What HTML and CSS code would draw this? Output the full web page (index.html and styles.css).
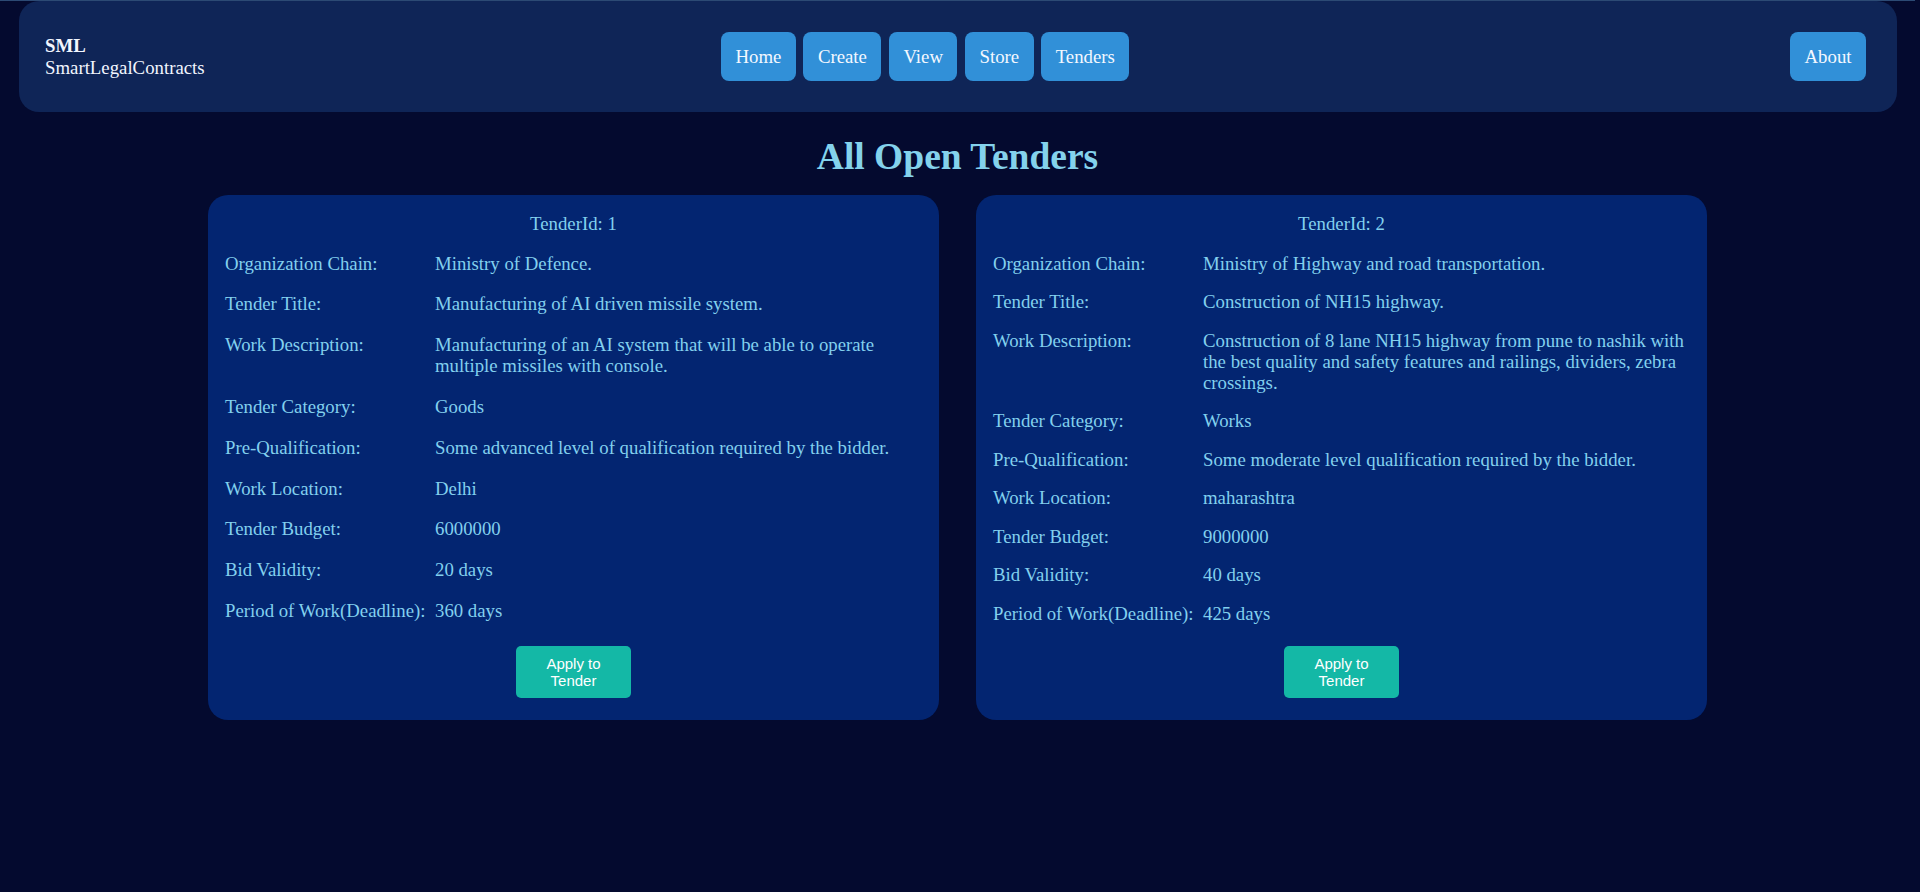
FILE: index.html
```html
<!DOCTYPE html>
<html lang="en">
<head>
<meta charset="utf-8">
<title>SmartLegalContracts - Tenders</title>
<link rel="stylesheet" href="styles.css">
</head>
<body>
<div class="topline"></div>
<header class="header">
  <div class="brand">
    <div class="brand-short">SML</div>
    <div class="brand-long">SmartLegalContracts</div>
  </div>
  <nav class="nav">
    <a class="nav-btn" href="#">Home</a>
    <a class="nav-btn" href="#">Create</a>
    <a class="nav-btn" href="#">View</a>
    <a class="nav-btn" href="#">Store</a>
    <a class="nav-btn" href="#">Tenders</a>
  </nav>
  <a class="nav-btn about" href="#">About</a>
</header>

<main class="main">
  <h1 class="title">All Open Tenders</h1>
  <div class="cards">
    <section class="card">
      <div class="card-id">TenderId: 1</div>
      <div class="rows">
        <div class="row"><div class="label">Organization Chain:</div><div class="value">Ministry of Defence.</div></div>
        <div class="row"><div class="label">Tender Title:</div><div class="value">Manufacturing of AI driven missile system.</div></div>
        <div class="row"><div class="label">Work Description:</div><div class="value">Manufacturing of an AI system that will be able to operate multiple missiles with console.</div></div>
        <div class="row"><div class="label">Tender Category:</div><div class="value">Goods</div></div>
        <div class="row"><div class="label">Pre-Qualification:</div><div class="value">Some advanced level of qualification required by the bidder.</div></div>
        <div class="row"><div class="label">Work Location:</div><div class="value">Delhi</div></div>
        <div class="row"><div class="label">Tender Budget:</div><div class="value">6000000</div></div>
        <div class="row"><div class="label">Bid Validity:</div><div class="value">20 days</div></div>
        <div class="row"><div class="label">Period of Work(Deadline):</div><div class="value">360 days</div></div>
      </div>
      <div class="actions"><button class="apply">Apply to Tender</button></div>
    </section>
    <section class="card">
      <div class="card-id">TenderId: 2</div>
      <div class="rows">
        <div class="row"><div class="label">Organization Chain:</div><div class="value">Ministry of Highway and road transportation.</div></div>
        <div class="row"><div class="label">Tender Title:</div><div class="value">Construction of NH15 highway.</div></div>
        <div class="row"><div class="label">Work Description:</div><div class="value">Construction of 8 lane NH15 highway from pune to nashik with the best quality and safety features and railings, dividers, zebra crossings.</div></div>
        <div class="row"><div class="label">Tender Category:</div><div class="value">Works</div></div>
        <div class="row"><div class="label">Pre-Qualification:</div><div class="value">Some moderate level qualification required by the bidder.</div></div>
        <div class="row"><div class="label">Work Location:</div><div class="value">maharashtra</div></div>
        <div class="row"><div class="label">Tender Budget:</div><div class="value">9000000</div></div>
        <div class="row"><div class="label">Bid Validity:</div><div class="value">40 days</div></div>
        <div class="row"><div class="label">Period of Work(Deadline):</div><div class="value">425 days</div></div>
      </div>
      <div class="actions"><button class="apply">Apply to Tender</button></div>
    </section>
  </div>
</main>
</body>
</html>
```

FILE: styles.css
```css
* { box-sizing: border-box; }

html, body {
  margin: 0;
  background: #040a2f;
}

body {
  padding-right: 5px;
  font-family: "Liberation Serif", "Times New Roman", serif;
  font-size: 18.8px;
  color: #82d0ee;
  min-height: 892px;
}

.topline {
  height: 1px;
  background: #2c4a74;
}

.header {
  margin: 0 18px 0 19px;
  height: 111px;
  background: #0f2557;
  border-radius: 20px;
  display: flex;
  align-items: center;
  padding: 0 31px 0 26px;
}

.brand {
  width: 676px;
  color: #f2f6ff;
  line-height: 22px;
  flex: 0 0 auto;
}

.brand-short { font-weight: bold; }

.nav {
  display: flex;
  gap: 7.5px;
}

.nav-btn {
  display: flex;
  align-items: center;
  height: 49px;
  padding: 0 14.5px;
  background: #3190d8;
  color: #f4f8ff;
  text-decoration: none;
  border-radius: 8px;
  font-size: 18.8px;
}

.about { margin-left: auto; }

.main {
  display: flex;
  flex-direction: column;
  align-items: center;
}

.title {
  margin: 0;
  padding: 25px 0 0;
  height: 83px;
  font-size: 37.5px;
  line-height: 40px;
  font-weight: bold;
  color: #84d2ec;
}

.cards {
  width: 1499px;
  display: grid;
  grid-template-columns: 1fr 1fr;
  column-gap: 37px;
}

.card {
  background: #032571;
  border-radius: 20px;
  padding: 18px 17px 22px;
  display: flex;
  flex-direction: column;
}

.card-id {
  text-align: center;
  line-height: 21px;
  margin-bottom: 18.5px;
}

.rows {
  flex: 1 1 auto;
  display: flex;
  flex-direction: column;
}

.row {
  flex: 1 1 auto;
  display: grid;
  grid-template-columns: 210px 1fr;
  align-items: start;
  line-height: 21px;
  padding-bottom: 17.5px;
}

.actions {
  display: flex;
  justify-content: center;
  margin-top: 5px;
}

.apply {
  width: 115px;
  height: 52px;
  padding: 0 6px;
  border: none;
  border-radius: 5px;
  background: #14b8a6;
  color: #ffffff;
  font-family: "Liberation Sans", Arial, sans-serif;
  font-size: 15px;
  line-height: 17px;
}
```
